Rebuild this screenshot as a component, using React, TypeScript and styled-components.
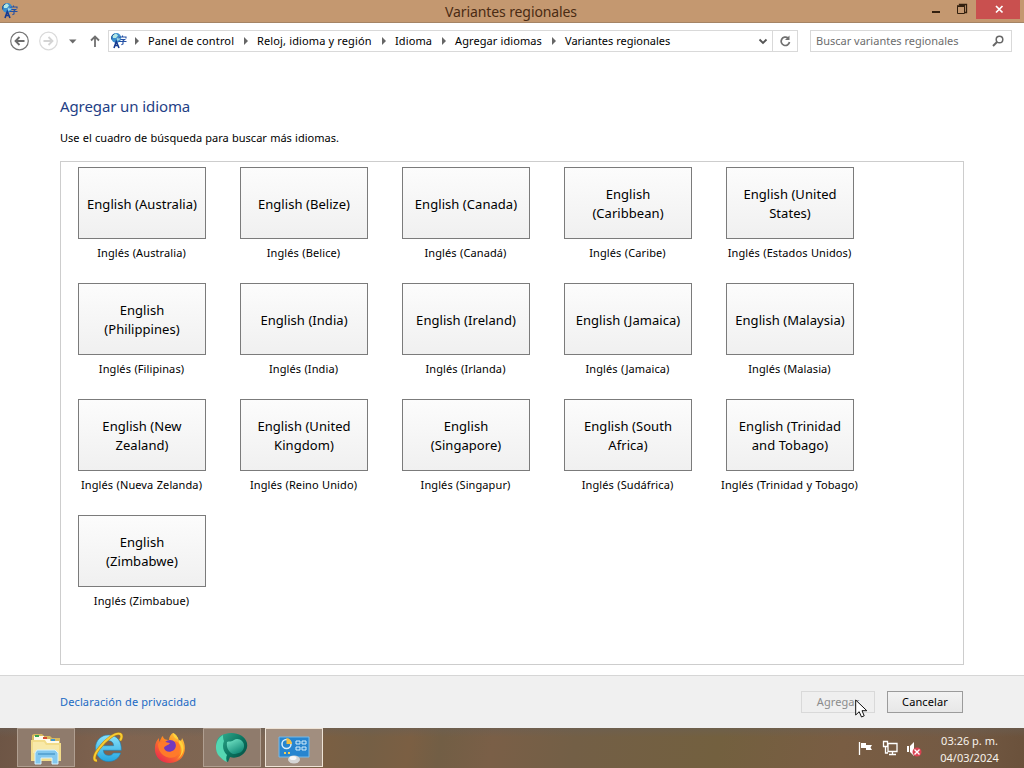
import React from "react";
import styled, { createGlobalStyle } from "styled-components";

const GlobalStyle = createGlobalStyle`
  * {
    box-sizing: border-box;
  }
  body {
    margin: 0;
    overflow: hidden;
    font-family: "Noto Sans", "Open Sans", sans-serif;
    font-size: 11px;
    color: #000;
  }
`;

const Screen = styled.div`
  display: flex;
  flex-direction: column;
  position: relative;
  width: 1024px;
  height: 768px;
  background: #fff;
`;

const TitleBar = styled.header`
  display: grid;
  grid-template-columns: 100px 1fr 100px;
  height: 23px;
  background: #c49870;
  border-bottom: 1px solid #a58465;
`;

const TitleIcon = styled.div`
  padding: 2px 0 0 1px;
`;

const Title = styled.div`
  text-align: center;
  font-size: 14px;
  line-height: 23px;
  letter-spacing: -0.1px;
  padding-right: 2px;
  color: #4a2b13;
`;

const WindowButtons = styled.div`
  display: flex;
`;

const WindowButton = styled.div<{ $width: number; $close?: boolean }>`
  display: flex;
  justify-content: center;
  width: ${(p) => p.$width}px;
  height: 19px;
  background: ${(p) => (p.$close ? "#c9504f" : "transparent")};
`;

const NavBar = styled.nav`
  display: flex;
  align-items: center;
  height: 36px;
  padding-left: 9px;
`;

const NavIcons = styled.div`
  width: 99px;
  height: 20px;
`;

const AddressBox = styled.div`
  display: flex;
  align-items: center;
  width: 690px;
  height: 22px;
  border: 1px solid #d9d9d9;
`;

const AddressIcon = styled.div`
  width: 20px;
  height: 18px;
  padding-left: 1px;
`;

const Crumb = styled.div<{ $width: number; $spacing: number }>`
  display: flex;
  align-items: center;
  width: ${(p) => p.$width}px;
  letter-spacing: ${(p) => p.$spacing}px;
  white-space: nowrap;
  line-height: 18px;
`;

const CrumbArrow = styled.span`
  width: 0;
  height: 0;
  margin: 0 9px 0 6px;
  border: 4px solid transparent;
  border-left-color: #666;
  border-right: 0;
`;

const AddressEnd = styled.div`
  display: flex;
  margin-left: auto;
  height: 20px;
`;

const RefreshCell = styled.div`
  width: 25px;
  height: 20px;
  border-left: 1px solid #d9d9d9;
`;

const SearchBox = styled.div`
  display: flex;
  justify-content: space-between;
  width: 202px;
  height: 22px;
  margin-left: 12px;
  padding: 0 6px 0 5px;
  border: 1px solid #d9d9d9;
  color: #6d6d6d;
  line-height: 19px;
`;

const Content = styled.main`
  height: 616px;
  padding: 36px 60px 0;
`;

const Heading = styled.h1`
  margin: 0;
  font-size: 15px;
  font-weight: 400;
  line-height: 22px;
  letter-spacing: -0.1px;
  color: #1f3f86;
`;

const Hint = styled.p`
  margin: 12px 0 14px;
  line-height: 18px;
  word-spacing: 0.4px;
`;

const VariantPanel = styled.section`
  display: flex;
  flex-wrap: wrap;
  align-content: flex-start;
  width: 904px;
  height: 504px;
  padding: 5px 92px 0 0;
  border: 1px solid #cdcdcd;
`;

const Variant = styled.div`
  display: flex;
  flex-direction: column;
  align-items: center;
  width: 162px;
  height: 116px;
`;

const VariantTile = styled.div`
  display: flex;
  align-items: center;
  justify-content: center;
  width: 128px;
  height: 72px;
  padding-top: 2px;
  border: 1px solid #7b7b7b;
  background: linear-gradient(#fcfcfc, #f0f0f0);
  font-size: 13px;
  line-height: 19px;
  letter-spacing: 0.05px;
  text-align: center;
  white-space: pre-line;
`;

const VariantCaption = styled.div`
  margin-top: 5px;
  padding-right: 1px;
  line-height: 18px;
  letter-spacing: 0.1px;
  word-spacing: 0.4px;
  white-space: nowrap;
`;

const Footer = styled.footer`
  display: flex;
  align-items: center;
  height: 53px;
  padding: 0 61px 0 60px;
  border-top: 1px solid #d6d6d6;
  background: #f0f0f0;
`;

const PrivacyLink = styled.a`
  margin-right: auto;
  padding-bottom: 2px;
  letter-spacing: 0.13px;
  color: #1a6ac4;
`;

const DialogButton = styled.button<{ $width: number }>`
  width: ${(p) => p.$width}px;
  height: 22px;
  margin-left: 12px;
  padding: 0;
  border: 1px solid #9b9b9b;
  background: linear-gradient(#f3f3f3, #e7e7e7);
  font: inherit;
  line-height: 20px;
  letter-spacing: 0.1px;
  color: #000;

  &:disabled {
    border-color: #d9d9d9;
    background: #efefef;
    color: #8c8c8c;
  }
`;

const Taskbar = styled.div`
  display: flex;
  height: 40px;
  padding-left: 15px;
  background:
    linear-gradient(180deg, rgba(104, 96, 88, 0.5) 0, transparent 9px),
    linear-gradient(100deg, #6d5545 0, #806450 12%, #7d6755 27%, #7a5f43 32%, #755f45 36%, #7b5f43 40%, #725e45 43%, #7a5f47 48%, #735f46 56%, #73603f 70%, #795d43 82%, #745a44 93%, #6a513b 100%);
`;

const TaskButton = styled.div<{ $state?: "open" | "active" }>`
  width: 58px;
  height: 39px;
  margin: 0 2px;
  border: 1px solid ${(p) => (p.$state === "active" ? "#eee3d6" : p.$state ? "#b09f91" : "transparent")};
  background: ${(p) => (p.$state === "active" ? "#a18e7f" : p.$state ? "#8f7b6c" : "transparent")};

  svg {
    display: block;
    margin: 0 auto;
  }
`;

const Tray = styled.div`
  width: 70px;
  height: 20px;
  margin: 11px 1px 0 auto;
`;

const Clock = styled.div`
  width: 96px;
  padding-top: 4px;
  padding-right: 13px;
  line-height: 17px;
  text-align: center;
  color: #f7f2ec;
`;

const Pointer = styled.svg`
  position: absolute;
  left: 855px;
  top: 699px;
`;

const crumbs = [
  { label: "Panel de control", width: 109, spacing: 0.14 },
  { label: "Reloj, idioma y región", width: 138, spacing: 0.14 },
  { label: "Idioma", width: 60, spacing: 0.1 },
  { label: "Agregar idiomas", width: 110, spacing: 0.1 },
  { label: "Variantes regionales", width: 130, spacing: 0 },
];

const variants = [
  ["English (Australia)", "Inglés (Australia)"],
  ["English (Belize)", "Inglés (Belice)"],
  ["English (Canada)", "Inglés (Canadá)"],
  ["English\n(Caribbean)", "Inglés (Caribe)"],
  ["English (United\nStates)", "Inglés (Estados Unidos)"],
  ["English\n(Philippines)", "Inglés (Filipinas)"],
  ["English (India)", "Inglés (India)"],
  ["English (Ireland)", "Inglés (Irlanda)"],
  ["English (Jamaica)", "Inglés (Jamaica)"],
  ["English (Malaysia)", "Inglés (Malasia)"],
  ["English (New\nZealand)", "Inglés (Nueva Zelanda)"],
  ["English (United\nKingdom)", "Inglés (Reino Unido)"],
  ["English\n(Singapore)", "Inglés (Singapur)"],
  ["English (South\nAfrica)", "Inglés (Sudáfrica)"],
  ["English (Trinidad\nand Tobago)", "Inglés (Trinidad y Tobago)"],
  ["English\n(Zimbabwe)", "Inglés (Zimbabue)"],
];

const LanguageIcon = () => (
  <svg width="18" height="18" viewBox="0 0 18 18" fill="none">
    <circle cx="6.3" cy="6" r="4.9" fill="#3a8fce" />
    <path d="M2.5 3.5 6 1.5l2 2-2 2.5H3z" fill="#b4e8e4" />
    <path d="m6.500 7 3-3 1 3-3 2z" fill="#9bd4e2" />
    <path d="M1.700 7.500A5 5 0 0 1 4 1.800" stroke="#154f92" />
    <path d="m4 16 2.300-6.500L9 16M5 13.500h3" stroke="#173b91" strokeWidth="1.6" />
    <path d="M9 6.500V5h7v1.500M10.500 7.500h4l-1.500 1.200V12l-1.600.7M8.500 9.500h8M12.500 3.500V5" stroke="#2450a4" strokeWidth="1.1" />
  </svg>
);

const NavigationIcons = () => (
  <svg width="99" height="20" viewBox="0 0 99 20" fill="none">
    <circle cx="10.5" cy="10" r="8.8" stroke="#757575" strokeWidth="1.2" />
    <path d="M15.5 10H6.5m4-4-4 4 4 4" stroke="#6b6b6b" strokeWidth="1.8" />
    <circle cx="39.5" cy="10" r="8.8" stroke="#dadada" strokeWidth="1.2" />
    <path d="M34.5 10h9m-4-4 4 4-4 4" stroke="#d4d4d4" strokeWidth="1.8" />
    <path d="M60 8.5h7.5l-3.8 4z" fill="#6b6b6b" />
    <path d="M86 16V5.5m-4 4 4-4 4 4" stroke="#707070" strokeWidth="1.8" />
  </svg>
);

const FolderIcon = () => (
  <svg width="34" height="36" viewBox="0 0 34 36">
    <path d="M3 8V6l2-1h8l2 2h6l2 2h8v22H3z" fill="#d7b95f" />
    <path d="M5 7h10v3h6v2h9v5H5z" fill="#fffbea" />
    <path d="M2 11h14l2 3h14v18H2z" fill="#f2dc8a" />
    <path d="M4 13h11l2 3h13v8H4z" fill="#f8e9a9" />
    <path d="M6 6h4v2H6z" fill="#39a350" />
    <path d="M14 8h4v2h-4z" fill="#d44c32" />
    <path d="M22 10h4v2h-4z" fill="#3c98d2" />
    <path d="M6 35V24l2-3h18l3 3v11h-6v-6H12v6z" fill="#83c8ee" stroke="#d7f2fd" />
    <path d="M9 25h17" stroke="#4b9aca" strokeWidth="1.4" />
  </svg>
);

const ExplorerIcon = () => (
  <svg width="34" height="36" viewBox="0 0 34 36" fill="none">
    <defs>
      <linearGradient id="ie" x2="0" y2="1">
        <stop stopColor="#8be3fb" />
        <stop offset="1" stopColor="#24a5df" />
      </linearGradient>
    </defs>
    <path
      fillRule="evenodd"
      d="M17.5 6C9.8 6 4.5 11.7 4.5 19S10 32.500 17.500 32.500c6 0 10.500-3.300 12.200-8.500h-7.300c-1 1.700-2.600 2.500-4.700 2.500-3.200 0-5.200-1.800-5.400-5.200h18C30.800 12 25.800 6 17.500 6zM12.400 16.700c.5-3.100 2.400-4.900 5.300-4.900s4.700 1.800 5 4.900z"
      fill="url(#ie)"
      stroke="#1b85bc"
      strokeWidth=".6"
    />
    <path d="M6 31.500c-4 .5-3.500-5 2-12C15 10 25 3 29.300 5c2 1 1.500 4-.2 6.500" stroke="#ba8514" strokeWidth="3" />
    <path d="M6 31.500c-4 .5-3.500-5 2-12C15 10 25 3 29.300 5c2 1 1.500 4-.2 6.500" stroke="#f8cd35" strokeWidth="2" />
  </svg>
);

const FirefoxIcon = () => (
  <svg width="34" height="36" viewBox="0 0 34 36">
    <defs>
      <linearGradient id="fox" x1="1" x2=".2" y2="1">
        <stop stopColor="#ffe04b" />
        <stop offset=".45" stopColor="#ff8b20" />
        <stop offset="1" stopColor="#e9264f" />
      </linearGradient>
    </defs>
    <path
      d="M20 4c4 2 5 5 6 8 2 0 3-1 3-3 6 10 3 24-12 25C7 34 1 27 2 18c0-4 2-7 4-9v4c2-2 2-5 4-6 0 3 3 4 6 4 0-3 2-6 4-7z"
      fill="url(#fox)"
    />
    <circle cx="17" cy="18" r="7" fill="#7139bd" />
    <path d="M5 15c5-5 8-1 12-1-2 3-5 2-6 5 1 4 6 5 10 2 3-3 2-7 0-9 9 1 7 13 1 16-8 3-17-3-17-13z" fill="#ff7a2a" />
    <path d="M20 4c4 2 6 6 6 10 5 7 2 14-3 17 10-5 10-18 1-21-3-1-4-4-4-6z" fill="#ffd33c" />
  </svg>
);

const BubbleIcon = () => (
  <svg width="34" height="36" viewBox="0 0 34 36">
    <defs>
      <linearGradient id="bubble" x2=".6" y2="1">
        <stop stopColor="#7aeacb" />
        <stop offset="1" stopColor="#128a77" />
      </linearGradient>
      <linearGradient id="bubbleBack" x2="1" y2=".8">
        <stop stopColor="#3ab596" />
        <stop offset=".6" stopColor="#0a7560" />
        <stop offset="1" stopColor="#064f44" />
      </linearGradient>
    </defs>
    <path d="M10 5C18 2 30 5 32 14c2 9-8 17-17 14l-2 5C6 30 1 24 1 18 1 9 5 6 10 5z" fill="url(#bubbleBack)" />
    <path d="M8 6C0 11-1 21 4 27c3 3 5 5 8 6-1-3-1-5 0-7-4-4-5-9-3-14-1-2-1-4-1-6z" fill="#55d7b3" />
    <path d="M12 13c2-1 5 0 7-2 4-3 11 1 10 7-1 5-5 7-11 7-4-2-7-6-6-12z" fill="url(#bubble)" />
  </svg>
);

const ControlPanelIcon = () => (
  <svg width="34" height="36" viewBox="0 0 34 36" fill="none">
    <path d="M2 8h30v20H2z" fill="#2785cf" stroke="#76b9e8" />
    <circle cx="9.500" cy="15" r="4.500" stroke="#d9effb" strokeWidth="1.500" />
    <path d="M9.500 15V9a6 6 0 0 1 5.500 6z" fill="#f2bd42" />
    <path d="M19 12h4v3h-4zm6 0h4v3h-4zm-6 6h4v3h-4zm6 0h4v3h-4z" stroke="#d3edfa" />
    <path d="M7 24h2m2 0h2" stroke="#f3cd55" strokeWidth="2" />
    <ellipse cx="17" cy="30.500" rx="6" ry="4" fill="#d5d5d5" />
    <ellipse cx="16" cy="29" rx="3.500" ry="2" fill="#f7f7f7" />
  </svg>
);

const TrayIcons = () => (
  <svg width="70" height="20" viewBox="0 0 70 20" fill="none">
    <path d="M2.500 3v13" stroke="#fff" strokeWidth="1.300" />
    <path d="M4 4h5v2h6l-1.500 2.500L15 11H9V9H4z" fill="#fff" />
    <path d="M31 4.500h9v8h-9zM35.500 13v3M32 15.500h7M26.500 2.500h4v5h-4zM28.500 8v6h2.500" stroke="#fff" strokeWidth="1.300" />
    <path d="M50 7h2v6h-2zM53 7l4-4v14l-4-4z" fill="#fff" />
    <circle cx="60" cy="13" r="4.500" fill="#d94352" />
    <path d="m57.500 10.500 5 5m0-5-5 5" stroke="#fff" strokeWidth="1.400" />
  </svg>
);

const App: React.FC = () => {
  return (
    <>
      <GlobalStyle />
      <Screen>
        <TitleBar>
          <TitleIcon>
            <LanguageIcon />
          </TitleIcon>
          <Title>Variantes regionales</Title>
          <WindowButtons>
            <WindowButton $width={26}>
              <svg width="26" height="19">
                <path d="M8 11h8v2H8z" fill="#33200f" />
              </svg>
            </WindowButton>
            <WindowButton $width={26}>
              <svg width="26" height="19" fill="none" stroke="#33200f">
                <path d="M7.500 6.500h7v7h-7z" />
                <path d="M7 6h8M9.500 5V4.500h7v8H15" strokeWidth="1.300" />
              </svg>
            </WindowButton>
            <WindowButton $width={44} $close>
              <svg width="44" height="19">
                <path d="m20 6 6.500 6.500m0-6.500L20 12.500" stroke="#fff" strokeWidth="1.700" />
              </svg>
            </WindowButton>
          </WindowButtons>
        </TitleBar>
        <NavBar>
          <NavIcons>
            <NavigationIcons />
          </NavIcons>
          <AddressBox>
            <AddressIcon>
              <LanguageIcon />
            </AddressIcon>
            {crumbs.map((crumb) => (
              <Crumb key={crumb.label} $width={crumb.width} $spacing={crumb.spacing}>
                <CrumbArrow />
                {crumb.label}
              </Crumb>
            ))}
            <AddressEnd>
              <svg width="18" height="20" fill="none">
                <path d="m5.500 8.500 3.500 3.500 3.500-3.500" stroke="#555" strokeWidth="1.800" />
              </svg>
              <RefreshCell>
                <svg width="24" height="20" fill="none">
                  <path d="M15 7A4.200 4.200 0 1 0 16.500 11" stroke="#707070" strokeWidth="1.700" />
                  <path d="M16.500 4.500V9H12z" fill="#707070" />
                </svg>
              </RefreshCell>
            </AddressEnd>
          </AddressBox>
          <SearchBox>
            <span>Buscar variantes regionales</span>
            <svg width="14" height="20" fill="none">
              <circle cx="8.500" cy="8.500" r="3.300" stroke="#666" strokeWidth="1.500" />
              <path d="m6 11-4 4" stroke="#666" strokeWidth="2" />
            </svg>
          </SearchBox>
        </NavBar>
        <Content>
          <Heading>Agregar un idioma</Heading>
          <Hint>Use el cuadro de búsqueda para buscar más idiomas.</Hint>
          <VariantPanel>
            {variants.map(([name, caption]) => (
              <Variant key={name}>
                <VariantTile>{name}</VariantTile>
                <VariantCaption>{caption}</VariantCaption>
              </Variant>
            ))}
          </VariantPanel>
        </Content>
        <Footer>
          <PrivacyLink>Declaración de privacidad</PrivacyLink>
          <DialogButton $width={74} disabled>
            Agregar
          </DialogButton>
          <DialogButton $width={76}>Cancelar</DialogButton>
        </Footer>
        <Taskbar>
          <TaskButton $state="open">
            <FolderIcon />
          </TaskButton>
          <TaskButton>
            <ExplorerIcon />
          </TaskButton>
          <TaskButton>
            <FirefoxIcon />
          </TaskButton>
          <TaskButton $state="open">
            <BubbleIcon />
          </TaskButton>
          <TaskButton $state="active">
            <ControlPanelIcon />
          </TaskButton>
          <Tray>
            <TrayIcons />
          </Tray>
          <Clock>
            03:26 p. m.
            <br />
            04/03/2024
          </Clock>
        </Taskbar>
        <Pointer width="13" height="20" viewBox="0 0 13 20">
          <path d="M.7 1v15l3.500-3.300L6.500 18l2.700-1.200L7 11.700h4.800z" fill="#fff" stroke="#111" />
        </Pointer>
      </Screen>
    </>
  );
};

export default App;
